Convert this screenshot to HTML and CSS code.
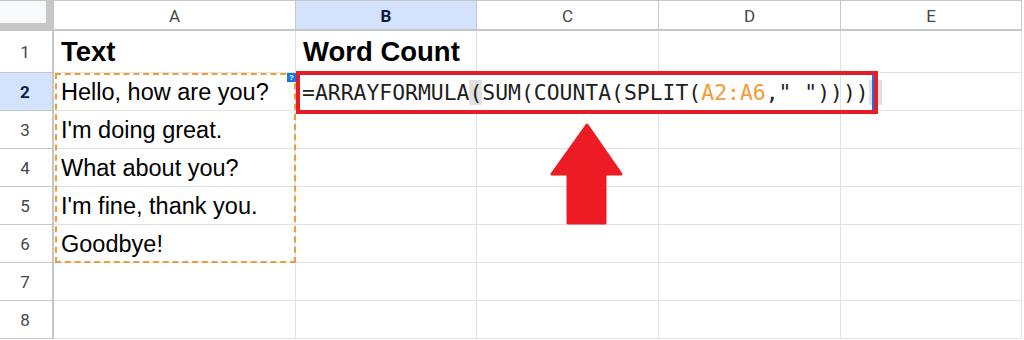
FILE: index.html
```html
<!DOCTYPE html>
<html>
    <head>
        <meta charset="UTF-8" />
        <title>Word Count</title>
        <link rel="stylesheet" href="styles.css">
    </head>
    <body>
        <div class="sheet">
            <div class="corner"></div>
            <div class="colHead">A</div>
            <div class="colHead active">B</div>
            <div class="colHead">C</div>
            <div class="colHead">D</div>
            <div class="colHead">E</div>

            <div class="rowHead">1</div>
            <div class="cell title">Text</div>
            <div class="cell title">Word Count</div>
            <div class="cell"></div>
            <div class="cell"></div>
            <div class="cell"></div>

            <div class="rowHead active">2</div>
            <div class="cell">Hello, how are you?</div>
            <div class="cell formula">=ARRAYFORMULA<span class="match">(</span>SUM(COUNTA(SPLIT(<span class="ref">A2:A6</span>," "))))<span class="match">)</span></div>
            <div class="cell"></div>

            <div class="rowHead">3</div>
            <div class="cell">I'm doing great.</div>
            <div class="cell"></div>
            <div class="cell"></div>
            <div class="cell"></div>
            <div class="cell"></div>

            <div class="rowHead">4</div>
            <div class="cell">What about you?</div>
            <div class="cell"></div>
            <div class="cell"></div>
            <div class="cell"></div>
            <div class="cell"></div>

            <div class="rowHead">5</div>
            <div class="cell">I'm fine, thank you.</div>
            <div class="cell"></div>
            <div class="cell"></div>
            <div class="cell"></div>
            <div class="cell"></div>

            <div class="rowHead">6</div>
            <div class="cell">Goodbye!</div>
            <div class="cell"></div>
            <div class="cell"></div>
            <div class="cell"></div>
            <div class="cell"></div>

            <div class="rowHead">7</div>
            <div class="cell"></div>
            <div class="cell"></div>
            <div class="cell"></div>
            <div class="cell"></div>
            <div class="cell"></div>

            <div class="rowHead">8</div>
            <div class="cell"></div>
            <div class="cell"></div>
            <div class="cell"></div>
            <div class="cell"></div>
            <div class="cell"></div>

            <!-- overlays -->
            <div class="range"></div>
            <div class="help">?</div>
            <div class="highlight"></div>
            <svg class="arrow" width="76" height="104" viewBox="0 0 76 104">
                <path d="M38 3 L72 52 L56 52 L56 101 L19 101 L19 52 L3 52 Z" fill="#ed1c24" stroke="#ed1c24" stroke-width="3" stroke-linejoin="round" />
            </svg>
        </div>
    </body>
</html>
```

FILE: styles.css
```css
body {
    margin: 0;
    background: #ffffff;
}
.sheet {
    position: relative;
    display: grid;
    grid-template-columns: 54px 242px 181px 182px 182px 181px;
    grid-template-rows: 31px 42px repeat(7, 38px);
    font-family: "Liberation Sans", Arial, sans-serif;
    color: #000000;
}
.corner {
    background: #f8f9fa;
    border-right: 8px solid #c7c7c7;
    border-bottom: 8px solid #c7c7c7;
    border-top: 1px solid #c4c7c5;
    box-sizing: border-box;
}
.colHead {
    display: flex;
    align-items: center;
    justify-content: center;
    box-sizing: border-box;
    border-top: 1px solid #c4c7c5;
    border-right: 1px solid #c4c7c5;
    border-bottom: 2px solid #c4c7c5;
    font-family: Roboto, "Liberation Sans", sans-serif;
    font-size: 17px;
    color: #444746;
    padding-top: 1px;
}
.colHead.active {
    background: #d3e3fd;
    color: #0b1c3f;
    font-weight: bold;
}
.rowHead {
    display: flex;
    align-items: center;
    justify-content: center;
    box-sizing: border-box;
    border-right: 2px solid #c4c7c5;
    border-bottom: 1px solid #c4c7c5;
    font-family: Roboto, "Liberation Sans", sans-serif;
    font-size: 17px;
    color: #444746;
    padding-right: 2px;
}
.rowHead.active {
    background: #d3e3fd;
    color: #0b1c3f;
    font-weight: bold;
}
.cell {
    display: flex;
    align-items: center;
    box-sizing: border-box;
    border-right: 1px solid #e1e3e1;
    border-bottom: 1px solid #e1e3e1;
    padding: 2px 0 0 7px;
    font-size: 23.5px;
    white-space: nowrap;
}
.title {
    font-weight: bold;
    font-size: 27.5px;
    padding-top: 0;
}
.formula {
    grid-column: span 3;
    padding-left: 6px;
    font-family: "DejaVu Sans Mono", monospace;
    font-size: 21.4px;
    color: #1f1f1f;
    overflow: visible;
}
.ref {
    color: #f29b38;
}
.match {
    background: #e1e1e1;
}
.range {
    position: absolute;
    left: 55px;
    top: 73px;
    width: 241px;
    height: 190px;
    box-sizing: border-box;
    border: 2px dashed #f29b38;
}
.help {
    position: absolute;
    left: 287px;
    top: 73px;
    width: 9px;
    height: 9px;
    background: #1a73e8;
    color: #ffffff;
    font-size: 8px;
    font-weight: bold;
    line-height: 9px;
    text-align: center;
}
.highlight {
    position: absolute;
    left: 296px;
    top: 71px;
    width: 582px;
    height: 43px;
    box-sizing: border-box;
    border: 4px solid #e81c27;
    box-shadow: inset -2px 0 0 #1a73e8;
}
.arrow {
    position: absolute;
    left: 549px;
    top: 122px;
}
```
